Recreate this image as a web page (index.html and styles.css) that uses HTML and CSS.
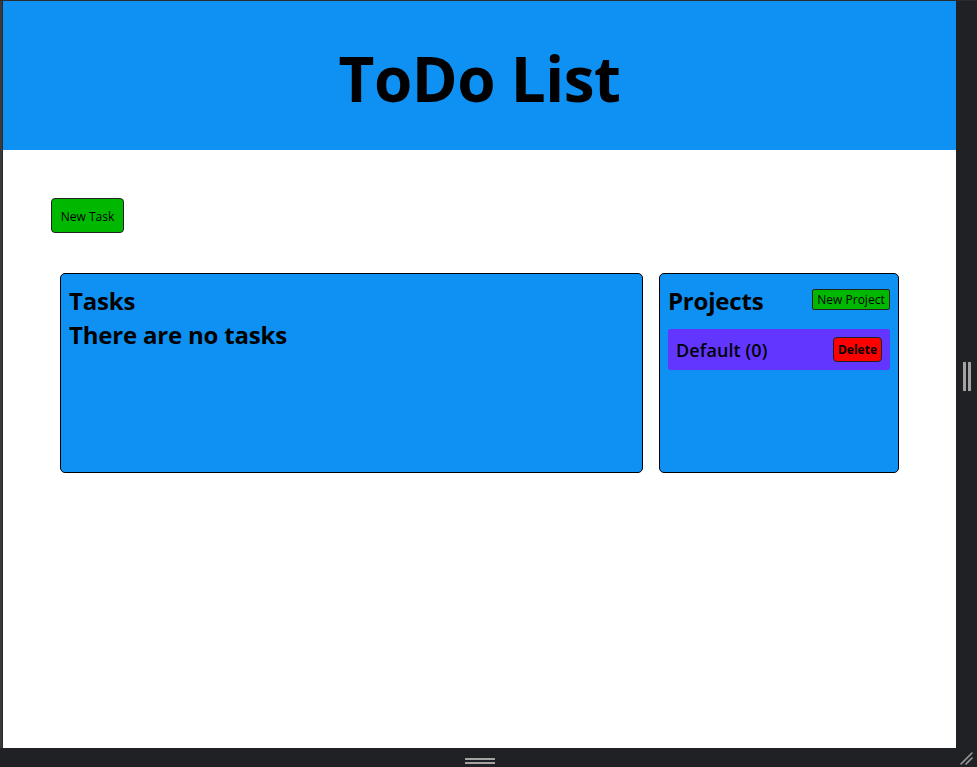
FILE: index.html
```html
<!DOCTYPE html>
<html lang="en">
<head>
<meta charset="utf-8">
<title>ToDo List</title>
<link rel="stylesheet" href="styles.css">
</head>
<body>
<div class="viewer">
  <div class="edge-top"></div>
  <div class="edge-left"></div>
  <div class="page">
    <header class="header"><h1 class="title">ToDo List</h1></header>
    <div class="toolbar"><button class="btn btn-green btn-task">New Task</button></div>
    <div class="board">
      <section class="card tasks">
        <h2 class="card-title">Tasks</h2>
        <h2 class="card-title">There are no tasks</h2>
      </section>
      <section class="card projects">
        <div class="projects-head">
          <h2 class="card-title">Projects</h2>
          <button class="btn btn-green btn-project">New Project</button>
        </div>
        <div class="project-row">
          <span class="project-name">Default (0)</span>
          <button class="btn btn-red">Delete</button>
        </div>
      </section>
    </div>
  </div>
  <div class="rail-right"><span class="vgrip"></span><span class="vgrip"></span></div>
  <div class="rail-bottom"><span class="hgrip"></span><span class="hgrip"></span></div>
  <div class="corner">
    <svg width="21" height="19" viewBox="0 0 21 19"><path d="M5 16 L16 5 M10 16 L16 10" stroke="#9a9a9a" stroke-width="1.6" stroke-linecap="round" fill="none"/></svg>
  </div>
</div>
</body>
</html>
```
FILE: styles.css
```css
html, body { margin: 0; padding: 0; }
body { background: #202124; font-family: "Open Sans", "Noto Sans", sans-serif; }
.viewer {
  width: 977px; height: 767px;
  display: grid;
  grid-template-columns: 3px 953px 21px;
  grid-template-rows: 1px 747px 19px;
  background: #202124;
}
.edge-top { grid-column: 1 / 4; grid-row: 1; background: #2b2b2e; }
.edge-left { grid-column: 1; grid-row: 2; background: #3a3a3c; border-right: 1px solid #2a2a2c; box-sizing: border-box; }
.page { grid-column: 2; grid-row: 2; background: #fff; overflow: hidden; }
.rail-right { grid-column: 3; grid-row: 2; display: flex; justify-content: center; align-items: center; gap: 2px; }
.vgrip { width: 3px; height: 29px; background: #a3a3a3; margin-top: 3px; }
.rail-bottom { grid-column: 2; grid-row: 3; display: flex; flex-direction: column; align-items: center; justify-content: center; gap: 2px; padding-top: 6px; box-sizing: border-box; }
.hgrip { width: 30px; height: 2px; background: #a3a3a3; }
.corner { grid-column: 3; grid-row: 3; display: flex; }

.header { height: 149px; background: #0e91f2; display: flex; align-items: center; justify-content: center; }
.title { margin: 0; font-size: 62px; font-weight: 700; color: #000; line-height: 1; padding-top: 5px; letter-spacing: -0.5px; }

.toolbar { padding: 48px 0 0 48px; height: 35px; }
.btn { font-family: inherit; color: #000; border: 1px solid #222; cursor: pointer; padding: 0; }
.btn-green { background: #00b800; }
.btn-task { width: 73px; height: 35px; border-radius: 4px; font-size: 12px; padding-top: 1px; }

.board { display: flex; gap: 16px; padding: 40px 57px 0 57px; }
.card { background: #0e91f2; border: 1px solid #000; border-radius: 5px; height: 200px; box-sizing: border-box; padding: 10px 8px 8px; }
.tasks { width: 583px; }
.projects { width: 240px; }
.card-title { margin: 0; font-size: 24px; font-weight: 700; line-height: 34px; color: #000; letter-spacing: -0.2px; }
.projects-head { display: flex; justify-content: space-between; align-items: center; }
.btn-project { width: 78px; height: 21px; border-radius: 2px; font-size: 12px; margin-top: -4px; }
.project-row { margin-top: 11px; background: #6236ff; border-radius: 2px; height: 41px; display: flex; align-items: center; justify-content: space-between; padding: 0 8px; }
.project-name { font-size: 18px; font-weight: 600; color: #000; letter-spacing: 0.1px; }
.btn-red { background: #ff0000; width: 49px; height: 25px; border-radius: 4px; font-size: 12px; font-weight: 700; }
```
